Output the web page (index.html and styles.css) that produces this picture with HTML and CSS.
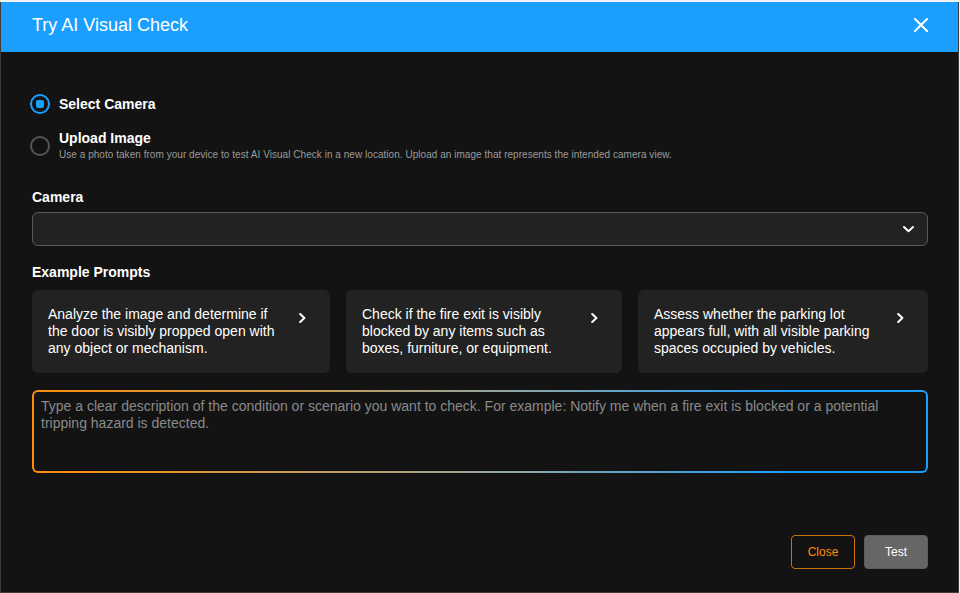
FILE: index.html
```html
<!DOCTYPE html>
<html lang="en">
<head>
<meta charset="utf-8">
<title>Try AI Visual Check</title>
<link rel="stylesheet" href="styles.css">
</head>
<body>
<div class="dialog">
  <header class="dialog-header">
    <h1 class="dialog-title">Try AI Visual Check</h1>
    <button class="icon-btn" aria-label="Close">
      <svg width="14" height="14" viewBox="0 0 14 14"><path d="M1 1 L13 13 M13 1 L1 13" stroke="#fff" stroke-width="2" stroke-linecap="round" fill="none"/></svg>
    </button>
  </header>
  <div class="dialog-body">
    <div class="radio-group">
      <label class="radio-row">
        <span class="radio checked"><span class="radio-dot"></span></span>
        <span class="radio-text"><span class="radio-title">Select Camera</span></span>
      </label>
      <label class="radio-row">
        <span class="radio"></span>
        <span class="radio-text">
          <span class="radio-title">Upload Image</span>
          <span class="radio-desc">Use a photo taken from your device to test AI Visual Check in a new location. Upload an image that represents the intended camera view.</span>
        </span>
      </label>
    </div>

    <div class="field">
      <div class="field-label">Camera</div>
      <div class="select">
        <span class="select-value"></span>
        <svg width="11" height="7" viewBox="0 0 11 7"><path d="M1 1 L5.5 5.2 L10 1" stroke="#fff" stroke-width="2" stroke-linecap="round" stroke-linejoin="round" fill="none"/></svg>
      </div>
    </div>

    <div class="field prompts-field">
      <div class="field-label">Example Prompts</div>
      <div class="prompts">
        <div class="prompt-card">
          <p class="prompt-text">Analyze the image and determine if the door is visibly propped open with any object or mechanism.</p>
          <span class="prompt-arrow"><svg width="7" height="10" viewBox="0 0 7 10"><path d="M1.2 1 L5.4 5 L1.2 9" stroke="#fff" stroke-width="2" stroke-linecap="round" stroke-linejoin="round" fill="none"/></svg></span>
        </div>
        <div class="prompt-card">
          <p class="prompt-text">Check if the fire exit is visibly blocked by any items such as boxes, furniture, or equipment.</p>
          <span class="prompt-arrow"><svg width="7" height="10" viewBox="0 0 7 10"><path d="M1.2 1 L5.4 5 L1.2 9" stroke="#fff" stroke-width="2" stroke-linecap="round" stroke-linejoin="round" fill="none"/></svg></span>
        </div>
        <div class="prompt-card">
          <p class="prompt-text">Assess whether the parking lot appears full, with all visible parking spaces occupied by vehicles.</p>
          <span class="prompt-arrow"><svg width="7" height="10" viewBox="0 0 7 10"><path d="M1.2 1 L5.4 5 L1.2 9" stroke="#fff" stroke-width="2" stroke-linecap="round" stroke-linejoin="round" fill="none"/></svg></span>
        </div>
      </div>
    </div>

    <textarea class="prompt-input" placeholder="Type a clear description of the condition or scenario you want to check. For example: Notify me when a fire exit is blocked or a potential tripping hazard is detected."></textarea>

    <div class="dialog-footer">
      <button class="btn btn-outline">Close</button>
      <button class="btn btn-grey">Test</button>
    </div>
  </div>
</div>
</body>
</html>
```
FILE: styles.css
```css
* { box-sizing: border-box; }

html, body {
  margin: 0;
  padding: 0;
  background: #f2f2f2;
  font-family: "Liberation Sans", Arial, Helvetica, sans-serif;
}

.dialog {
  margin-top: 2px;
  width: 959px;
  height: 591px;
  background: #131313;
  border: 1px solid #3c3c3c;
  border-top: none;
  display: flex;
  flex-direction: column;
}

.dialog-header {
  height: 50px;
  background: #1a9fff;
  display: flex;
  align-items: center;
  justify-content: space-between;
  padding: 0 30px 4px 31px;
  flex-shrink: 0;
}

.dialog-title {
  margin: 0;
  font-size: 18px;
  font-weight: normal;
  color: #fff;
  line-height: 22px;
}

.icon-btn {
  background: none;
  border: none;
  padding: 0;
  width: 14px;
  height: 14px;
  display: flex;
  cursor: pointer;
}

.dialog-body {
  flex: 1;
  display: flex;
  flex-direction: column;
  padding: 42px 30px 23px 31px;
}

.radio-group {
  display: flex;
  flex-direction: column;
  gap: 16px;
}

.radio-row {
  display: flex;
  align-items: center;
  gap: 9px;
  margin-left: -2px;
}

.radio {
  width: 20px;
  height: 20px;
  border-radius: 50%;
  border: 2.5px solid #555;
  display: flex;
  align-items: center;
  justify-content: center;
  flex-shrink: 0;
}

.radio.checked {
  border-color: #1a9fff;
}

.radio-dot {
  width: 8px;
  height: 8px;
  border-radius: 2px;
  background: #1a9fff;
}

.radio-text {
  display: flex;
  flex-direction: column;
  min-height: 20px;
  justify-content: center;
}

.radio-title {
  font-size: 14px;
  font-weight: bold;
  color: #fff;
  line-height: 17px;
}

.radio-desc {
  margin-top: 2px;
  font-size: 10px;
  line-height: 12px;
  color: #9a9a9a;
  letter-spacing: 0.04px;
}

.field {
  margin-top: 28px;
  display: flex;
  flex-direction: column;
}

.field-label {
  font-size: 14px;
  font-weight: bold;
  color: #fff;
  line-height: 17px;
  margin-bottom: 6px;
}

.select {
  height: 34px;
  background: #222;
  border: 1px solid #5a5a5a;
  border-radius: 6px;
  display: flex;
  align-items: center;
  justify-content: space-between;
  padding: 0 13px 0 12px;
}

.prompts-field {
  margin-top: 18px;
}

.prompts-field .field-label {
  margin-bottom: 9px;
}

.prompts {
  display: grid;
  grid-template-columns: 298fr 276fr 290fr;
  gap: 16px;
}

.prompt-card {
  background: #222;
  border-radius: 6px;
  padding: 16px;
  display: flex;
  align-items: flex-start;
  height: 83px;
  cursor: pointer;
}

.prompt-text {
  flex: 1;
  margin: 0;
  font-size: 14px;
  line-height: 17px;
  color: #fff;
}

.prompt-arrow {
  width: 24px;
  display: flex;
  justify-content: center;
  margin-top: 7px;
  flex-shrink: 0;
}

.prompt-input {
  margin-top: 17px;
  height: 83px;
  width: 100%;
  resize: none;
  border: 2px solid transparent;
  border-radius: 6px;
  background:
    linear-gradient(#131313, #131313) padding-box,
    linear-gradient(90deg, #ff8c0a 0%, #c89a50 30%, #8aa6a8 55%, #1a9fff 85%, #1a9fff 100%) border-box;
  color: #fff;
  font-family: "Liberation Sans", Arial, Helvetica, sans-serif;
  font-size: 14px;
  line-height: 17px;
  padding: 6px 7px;
  outline: none;
}

.prompt-input::placeholder {
  color: #8a8a8a;
}

.dialog-footer {
  margin-top: auto;
  display: flex;
  justify-content: flex-end;
  gap: 9px;
}

.btn {
  width: 64px;
  height: 34px;
  border-radius: 4px;
  font-family: "Liberation Sans", Arial, Helvetica, sans-serif;
  font-size: 12px;
  cursor: pointer;
}

.btn-outline {
  background: transparent;
  border: 1px solid #c97208;
  color: #ff8c0a;
}

.btn-grey {
  background: #666;
  border: 1px solid #5c5c5c;
  color: #fff;
}
```
